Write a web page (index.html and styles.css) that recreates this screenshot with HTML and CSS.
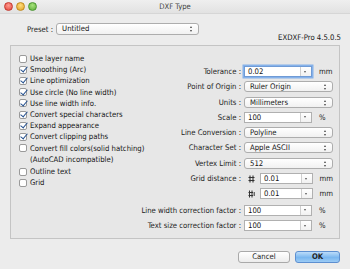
FILE: index.html
```html
<!DOCTYPE html>
<html lang="en">
<head>
  <meta charset="UTF-8">
  <title>DXF Type</title>
  <link rel="stylesheet" href="styles.css">
</head>
<body>
  <div class="window">
    <div class="titlebar">
      <div class="lights">
        <span class="light red"></span>
        <span class="light yellow"></span>
        <span class="light green"></span>
      </div>
      <div class="title">DXF Type</div>
    </div>

    <div class="preset-row">
      <label>Preset :</label>
      <div class="popup preset">Untitled<span class="arrows"></span></div>
    </div>
    <div class="version">EXDXF-Pro 4.5.0.5</div>

    <div class="group">
      <div class="top">
        <div class="checks">
          <div class="check"><span class="box"></span>Use layer name</div>
          <div class="check on"><span class="box"></span>Smoothing (Arc)</div>
          <div class="check on"><span class="box"></span>Line optimization</div>
          <div class="check on"><span class="box"></span>Use circle (No line width)</div>
          <div class="check on"><span class="box"></span>Use line width info.</div>
          <div class="check on"><span class="box"></span>Convert special characters</div>
          <div class="check on"><span class="box"></span>Expand appearance</div>
          <div class="check on"><span class="box"></span>Convert clipping paths</div>
          <div class="check two"><span class="box"></span>Convert fill colors(solid hatching)<br>(AutoCAD incompatible)</div>
          <div class="check gap"><span class="box"></span>Outline text</div>
          <div class="check"><span class="box"></span>Grid</div>
        </div>

        <div class="form">
          <label>Tolerance :</label>
          <div class="field"><div class="combo focus"><span class="val">0.02</span><span class="drop"></span></div><span class="unit">mm</span></div>

          <label>Point of Origin :</label>
          <div class="field"><div class="popup">Ruler Origin<span class="arrows"></span></div></div>

          <label>Units :</label>
          <div class="field"><div class="popup">Millimeters<span class="arrows"></span></div></div>

          <label>Scale :</label>
          <div class="field"><div class="combo"><span class="val">100</span><span class="drop"></span></div><span class="unit">%</span></div>

          <label>Line Conversion :</label>
          <div class="field"><div class="popup">Polyline<span class="arrows"></span></div></div>

          <label>Character Set :</label>
          <div class="field"><div class="popup">Apple ASCII<span class="arrows"></span></div></div>

          <label>Vertex Limit :</label>
          <div class="field"><div class="popup">512<span class="arrows"></span></div></div>

          <label>Grid distance :</label>
          <div class="field">
            <svg class="gridicon" width="7" height="8" viewBox="0 0 7 8"><path d="M2 0.5V7.5M5 0.5V7.5M0.5 2.5H6.5M0.5 5.5H6.5" stroke="#333" stroke-width="1.1" fill="none"/></svg>
            <div class="combo short"><span class="val">0.01</span><span class="drop"></span></div><span class="unit">mm</span>
          </div>

          <label></label>
          <div class="field">
            <svg class="gridicon" width="7" height="8" viewBox="0 0 7 8"><path d="M1.5 0.5V7.5M4 0.5V7.5M0.5 2.5H5M0.5 5.5H5M6.2 2V6" stroke="#333" stroke-width="1" fill="none"/></svg>
            <div class="combo short"><span class="val">0.01</span><span class="drop"></span></div><span class="unit">mm</span>
          </div>
        </div>
      </div>

      <div class="form bottom">
        <label>Line width correction factor :</label>
        <div class="field"><div class="combo"><span class="val">100</span><span class="drop"></span></div><span class="unit">%</span></div>

        <label>Text size correction factor :</label>
        <div class="field"><div class="combo"><span class="val">100</span><span class="drop"></span></div><span class="unit">%</span></div>
      </div>
    </div>

    <div class="buttons">
      <button class="btn">Cancel</button>
      <button class="btn ok">OK</button>
    </div>
  </div>
</body>
</html>
```

FILE: styles.css
```css
body {
  margin: 0;
  padding: 0;
  background: #ececec;
  font-family: 'DejaVu Sans', sans-serif;
  font-stretch: condensed;
  font-size: 7.7px;
  color: #151515;
}
.window {
  width: 350px;
  height: 269px;
  overflow: hidden;
  background: #ececec;
}
.titlebar {
  height: 13px;
  display: flex;
  align-items: center;
  background: linear-gradient(#efefef, #e2e2e2);
  border-bottom: 1px solid #d6d6d6;
  position: relative;
}
.lights {
  display: flex;
  gap: 3px;
  padding-left: 4px;
}
.light {
  width: 7px;
  height: 7px;
  border-radius: 50%;
  display: block;
}
.red { background: radial-gradient(circle at 50% 35%, #ff9a8f, #e2463c); border: 0.5px solid #c5382f; }
.yellow { background: radial-gradient(circle at 50% 35%, #ffdc7a, #e0a22a); border: 0.5px solid #c28a1d; }
.green { background: radial-gradient(circle at 50% 35%, #a6e27a, #5eae3a); border: 0.5px solid #4a9630; }
.title {
  position: absolute;
  left: 0;
  right: 0;
  text-align: center;
  color: #444;
  font-size: 7.6px;
}

.preset-row {
  display: flex;
  align-items: center;
  gap: 3px;
  margin-top: 9px;
  padding-left: 27px;
}
.preset-row label {
  color: #222;
}
.popup {
  position: relative;
  height: 11px;
  line-height: 10px;
  padding-left: 5px;
  border: 1px solid #adadad;
  border-radius: 3px;
  background: linear-gradient(#ffffff, #f1f1f1);
  box-sizing: border-box;
  width: 89px;
}
.popup.preset {
  width: 143px;
  height: 12px;
  line-height: 10.5px;
}
.arrows {
  position: absolute;
  right: 5px;
  top: 2px;
  width: 3px;
  height: 6px;
}
.arrows::before, .arrows::after {
  content: "";
  position: absolute;
  left: 0;
  border-left: 1.5px solid transparent;
  border-right: 1.5px solid transparent;
}
.arrows::before { top: 0; border-bottom: 2px solid #444; }
.arrows::after { bottom: 0; border-top: 2px solid #444; }

.version {
  text-align: right;
  padding-right: 9px;
  margin-top: -2px;
  line-height: 9px;
}

.group {
  margin: 3px 10px 0 10px;
  height: 194px;
  box-sizing: border-box;
  border: 1px solid #c4c4c4;
  background: #e7e7e7;
  padding: 7px 6px 0 8px;
}
.top {
  display: flex;
}
.checks {
  width: 140px;
  display: flex;
  flex-direction: column;
}
.check {
  display: flex;
  align-items: flex-start;
  line-height: 11.2px;
  white-space: nowrap;
}
.check.gap {
  margin-top: 1px;
}
.box {
  flex: none;
  width: 8px;
  height: 8px;
  margin: 1.5px 3px 0 0;
  box-sizing: border-box;
  border: 1px solid #9a9a9a;
  border-radius: 2px;
  background: #fff;
  position: relative;
}
.check.on .box::after {
  content: "";
  position: absolute;
  left: 1.5px;
  top: -1.5px;
  width: 3px;
  height: 6px;
  border-right: 1.8px solid #24508f;
  border-bottom: 1.8px solid #24508f;
  transform: rotate(40deg);
}

.form {
  flex: 1;
  display: grid;
  grid-template-columns: 1fr 89px;
  column-gap: 3px;
  row-gap: 4.3px;
  margin-top: 13px;
  align-items: center;
}
.form label {
  text-align: right;
  white-space: nowrap;
  color: #222;
}
.form.bottom {
  margin-top: 5.5px;
}
.field {
  display: flex;
  align-items: center;
  height: 11px;
}
.combo {
  display: flex;
  width: 68px;
  height: 11px;
  box-sizing: border-box;
  border: 1px solid #b0b0b0;
  background: #fff;
}
.combo.focus {
  box-shadow: 0 0 0 1.5px #86b2ea;
  border-color: #6f9bd6;
}
.combo.short {
  width: 56px;
  margin-left: 5px;
}
.combo .val {
  flex: 1;
  padding-left: 3px;
  line-height: 9px;
}
.drop {
  width: 10px;
  border-left: 1px solid #cfcfcf;
  position: relative;
  background: linear-gradient(#fff, #f1f1f1);
}
.drop::after {
  content: "";
  position: absolute;
  left: 3px;
  top: 3.5px;
  border-left: 1.7px solid transparent;
  border-right: 1.7px solid transparent;
  border-top: 2.5px solid #555;
}
.unit {
  margin-left: 7px;
  color: #222;
}
.gridicon {
  flex: none;
  margin-left: 4px;
}

.buttons {
  display: flex;
  justify-content: flex-end;
  gap: 5px;
  padding-right: 10px;
  margin-top: 12px;
}
.btn {
  font: inherit;
  font-stretch: condensed;
  height: 12px;
  padding: 0;
  line-height: 10px;
  width: 52px;
  border: 1px solid #a9a9a9;
  border-radius: 3px;
  background: linear-gradient(#ffffff, #ececec);
  color: #222;
}
.btn.ok {
  width: 45px;
  border-color: #5d8fd0;
  background: linear-gradient(#bcdcfa, #7ab7ef 55%, #9ccbf5);
  font-weight: bold;
}
```
